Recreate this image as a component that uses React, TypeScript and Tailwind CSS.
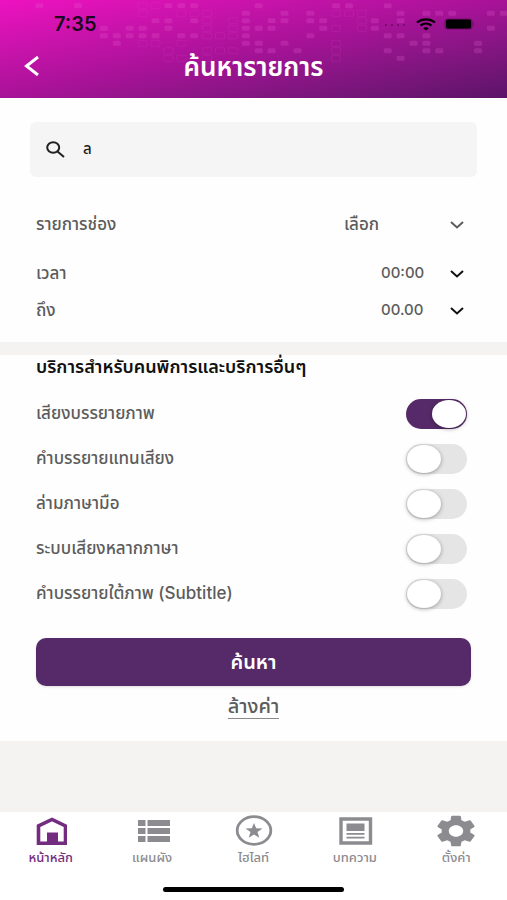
import { useState } from 'react';

// [column, row] cells of the mosaic behind the header
const SOLID_CELLS = [
  [3, 0], [6, 0], [13, 0], [14, 0], [15, 0], [20, 0], [26, 0], [27, 0], [30, 0],
  [19, 1], [22, 1], [24, 1], [31, 1], [33, 1], [34, 1], [35, 1], [38, 1], [39, 1],
  [12, 2], [13, 2], [15, 2], [19, 2], [21, 2], [22, 2], [24, 2], [25, 2], [29, 2], [31, 2],
  [8, 3], [10, 3], [11, 3], [13, 3], [19, 3], [20, 3], [21, 3], [25, 3], [29, 3], [38, 3],
  [8, 4], [9, 4], [10, 4], [11, 4], [12, 4], [14, 4], [15, 4], [19, 4], [24, 4], [30, 4], [31, 4], [33, 4],
  [9, 5], [19, 5], [20, 5], [22, 5], [32, 5], [33, 5], [37, 5],
  [20, 6], [21, 6], [23, 6], [30, 6], [33, 6], [34, 6], [37, 6],
  [31, 7],
];

const OUTLINE_CELLS = [
  [11, 0], [12, 0], [11, 1], [14, 1], [15, 1], [16, 1], [26, 1], [27, 1], [28, 1],
  [16, 2], [18, 2], [28, 2], [16, 3], [18, 3], [26, 3], [28, 3],
  [16, 4], [17, 4], [18, 4], [11, 5], [12, 5], [14, 5], [26, 5],
  [13, 6], [16, 6], [17, 6], [18, 6], [26, 6], [13, 7], [14, 7], [16, 7], [26, 7],
];

const SERVICES = [
  { id: 'audio', label: 'เสียงบรรยายภาพ' },
  { id: 'caption', label: 'คำบรรยายแทนเสียง' },
  { id: 'sign', label: 'ล่ามภาษามือ' },
  { id: 'multi', label: 'ระบบเสียงหลากภาษา' },
  { id: 'subtitle', label: 'คำบรรยายใต้ภาพ (Subtitle)' },
];

const NAV_ITEMS = [
  { id: 'home', label: 'หน้าหลัก', icon: <HomeIcon /> },
  { id: 'schedule', label: 'แผนผัง', icon: <ScheduleIcon /> },
  { id: 'highlight', label: 'ไฮไลท์', icon: <HighlightIcon /> },
  { id: 'article', label: 'บทความ', icon: <ArticleIcon /> },
  { id: 'settings', label: 'ตั้งค่า', icon: <SettingsIcon /> },
];

function HomeIcon() {
  return (
    <svg width="32" height="32" viewBox="0 0 32 32" fill="none">
      <path d="M4 28.200V11L17.500 4.500 31 11v17.200Z" stroke="currentColor" strokeWidth="3.600" transform="translate(-.5 0)" />
      <path d="M12 17.500h11V29H12z" fill="currentColor" />
    </svg>
  );
}

function ScheduleIcon() {
  return (
    <svg width="38" height="32" viewBox="0 0 38 32" fill="currentColor">
      <path d="M5 5h7.500v6H5zM14.500 5H37v6H14.500zM5 13h7.500v6H5zM14.500 13H37v6H14.500zM5 21h7.500v6H5zM14.500 21H37v6H14.500z" />
    </svg>
  );
}

function HighlightIcon() {
  return (
    <svg width="40" height="32" viewBox="0 0 40 32" fill="none">
      <ellipse cx="21" cy="15.500" rx="16.800" ry="13.800" stroke="currentColor" strokeWidth="2.800" />
      <path d="M21 8l2.200 5.200 6.300.2-5 3.700 1.800 5.600-5.300-3.200-5.300 3.200 1.800-5.600-5-3.700 6.300-.2z" fill="currentColor" />
    </svg>
  );
}

function ArticleIcon() {
  return (
    <svg width="36" height="32" viewBox="0 0 36 32" fill="none">
      <path d="M4 4h29.500v24H4z" stroke="currentColor" strokeWidth="3.400" />
      <path d="M9.500 8.500h18V16h-18zM9.500 18h18v1.800h-18zM9.500 21.800h18v1.800h-18z" fill="currentColor" />
    </svg>
  );
}

function SettingsIcon() {
  return (
    <svg width="40" height="32" viewBox="2 2 20 20" preserveAspectRatio="none" fill="currentColor">
      <path d="M19.14 12.94c.04-.3.06-.61.06-.94 0-.32-.02-.64-.07-.94l2.030-1.580c.18-.14.23-.41.12-.61l-1.920-3.320c-.12-.22-.37-.29-.59-.22l-2.390.96c-.5-.38-1.030-.7-1.620-.94l-.36-2.540c-.04-.24-.24-.41-.48-.41h-3.840c-.24 0-.43.17-.47.41l-.36 2.540c-.59.24-1.130.57-1.620.94l-2.390-.96c-.22-.08-.47 0-.59.22L2.740 8.870c-.12.21-.08.47.12.61l2.030 1.580c-.05.3-.09.63-.09.94s.02.64.07.94l-2.030 1.580c-.18.14-.23.41-.12.61l1.920 3.320c.12.22.37.29.59.22l2.390-.96c.5.38 1.030.7 1.620.94l.36 2.540c.05.24.24.41.48.41h3.840c.24 0 .44-.17.47-.41l.36-2.540c.59-.24 1.130-.56 1.620-.94l2.390.96c.22.08.47 0 .59-.22l1.920-3.320c.12-.22.07-.47-.12-.61l-2.010-1.580zM12 15.600c-1.980 0-3.600-1.620-3.600-3.600s1.620-3.600 3.600-3.600 3.600 1.620 3.600 3.600-1.620 3.600-3.600 3.600z" />
    </svg>
  );
}

function Mosaic() {
  return (
    <svg className="absolute left-0 top-0" width="507" height="98" viewBox="0 0 507 98" fill="none" aria-hidden="true">
      {SOLID_CELLS.map(([c, r]) => (
        <rect key={`s${c}-${r}`} x={c * 12.9 - 3.3} y={r * 7.5 + 3.2} width="8" height="5" rx="1.500" fill="#e45fd0" fillOpacity="0.24" />
      ))}
      {OUTLINE_CELLS.map(([c, r]) => (
        <rect key={`o${c}-${r}`} x={c * 12.9 - 3.8} y={r * 7.5 + 2.8} width="9" height="6" rx="1" stroke="#e45fd0" strokeOpacity="0.14" />
      ))}
    </svg>
  );
}

type SelectRowProps = {
  id: string;
  label: string;
  options: string[];
  selectClass: string;
  arrowClass: string;
};

function SelectRow({ id, label, options, selectClass, arrowClass }: SelectRowProps) {
  return (
    <div className="flex h-[37px] items-center justify-between">
      <label htmlFor={id}>{label}</label>
      <div className="relative flex items-center">
        <select id={id} className={`h-8 appearance-none bg-transparent outline-none ${selectClass}`}>
          {options.map(o => (
            <option key={o}>{o}</option>
          ))}
        </select>
        <svg className={`pointer-events-none absolute right-[7px] ${arrowClass}`} width="14" height="8" viewBox="0 0 14 8" fill="none" stroke="currentColor" strokeWidth="2">
          <path d="M1 1l6 5.500L13 1" />
        </svg>
      </div>
    </div>
  );
}

export default function App() {
  const [query, setQuery] = useState('ล');
  const [enabled, setEnabled] = useState<string[]>(['audio']);

  const toggle = (id: string) => {
    setEnabled(prev => (prev.includes(id) ? prev.filter(x => x !== id) : [...prev, id]));
  };

  return (
    <div className="flex min-h-screen flex-col bg-[#f4f3f1] font-['Inter','Noto_Sans_Thai','Noto_Sans',sans-serif] text-[17px] font-medium text-[#5c5c5c]">
      {/* Header */}
      <header className="relative h-[98px] overflow-hidden bg-linear-to-br from-[#ee12c0] via-[#a81298] to-[#5c1468]">
        <Mosaic />
        <div className="relative flex h-12 items-center justify-between pl-[54px] pr-8 text-[#1c0620]">
          <span className="text-xl font-semibold">7:35</span>
          <div className="flex items-center gap-2">
            <svg width="24" height="4" viewBox="0 0 24 4" fill="currentColor" opacity="0.4">
              <circle cx="2" cy="3" r="1" />
              <circle cx="8" cy="3" r="1" />
              <circle cx="14" cy="3" r="1" />
              <circle cx="20" cy="3" r="1" />
            </svg>
            <svg width="20" height="13" viewBox="0 0 20 13" fill="none" stroke="#000" strokeWidth="2.200">
              <path d="M1 4.500C6 .2 14 .2 19 4.500" />
              <path d="M4.500 7.600c3.200-2.600 7.800-2.600 11 0" />
              <path d="M10 12.500L7.300 10.200c1.500-1.300 3.900-1.300 5.400 0z" fill="#000" stroke="none" />
            </svg>
            <svg width="31" height="12" viewBox="0 0 31 12">
              <rect x="0.500" y="0.500" width="28" height="11" rx="3" fill="#000" fillOpacity="0.3" />
              <rect x="2" y="1.500" width="25" height="9" rx="2" fill="#000" />
              <path d="M29 4c1.500.5 1.500 3.500 0 4z" fill="#000" fillOpacity="0.3" />
            </svg>
          </div>
        </div>
        <div className="relative flex h-9 items-center justify-center text-white">
          <button aria-label="ย้อนกลับ" className="absolute left-6">
            <svg width="16" height="20" viewBox="0 0 16 20" fill="none" stroke="currentColor" strokeWidth="3">
              <path d="M14 1L2.500 10 14 19" />
            </svg>
          </button>
          <h1 className="text-[26px] font-semibold">ค้นหารายการ</h1>
        </div>
      </header>

      {/* Search + filters */}
      <section className="bg-[#fefefe] px-9 pb-[13px] pt-6">
        <label className="-mx-[6px] flex h-[55px] items-center gap-[18px] rounded-md bg-[#f5f5f5] px-4 text-[#222]">
          <svg width="19" height="17" viewBox="0 0 19 17" fill="none" stroke="currentColor" strokeWidth="2" className="shrink-0">
            <ellipse cx="7.200" cy="6.500" rx="6" ry="5.300" />
            <path d="M11.500 10.500l6.500 5.500" />
          </svg>
          <input
            type="text"
            aria-label="ค้นหา"
            value={query}
            onChange={e => setQuery(e.target.value)}
            className="min-w-0 flex-1 bg-transparent text-[15px] outline-none"
          />
        </label>
        <div className="mt-[29px]">
          <SelectRow id="channel" label="รายการช่อง" options={['เลือก']} selectClass="w-[127px]" arrowClass="text-[#5c5c5c]" />
        </div>
        <div className="mt-3">
          <SelectRow id="from" label="เวลา" options={['00:00']} selectClass="w-[90px] text-[15px]" arrowClass="text-[#111]" />
          <SelectRow id="to" label="ถึง" options={['00.00']} selectClass="w-[90px] text-[15px]" arrowClass="text-[#111]" />
        </div>
      </section>

      {/* Accessibility services */}
      <section className="mt-[13px] bg-[#fefefe] px-9 pb-[22px]">
        <h2 className="h-9 text-lg leading-6 font-semibold whitespace-nowrap text-[#111]">บริการสำหรับคนพิการและบริการอื่นๆ</h2>
        {SERVICES.map(s => (
          <label key={s.id} className="flex h-[45px] items-center justify-between pr-1">
            {s.label}
            <input
              type="checkbox"
              role="switch"
              checked={enabled.includes(s.id)}
              onChange={() => toggle(s.id)}
              className="h-[30px] w-[61px] shrink-0 cursor-pointer appearance-none rounded-full bg-[#e5e5e5] p-px transition-colors before:block before:h-7 before:w-[34px] before:rounded-[50%] before:bg-white before:shadow-[0_1px_4px_rgba(0,0,0,0.35)] checked:bg-[#562a68] checked:before:ml-auto"
            />
          </label>
        ))}
        <button className="mt-[22px] block h-12 w-full rounded-[10px] bg-[#562a68] text-xl font-semibold text-white shadow-sm">
          ค้นหา
        </button>
        <div className="mt-2 text-center text-xl leading-6">
          <button className="border-b border-[#8a8a8a]">ล้างค่า</button>
        </div>
      </section>

      {/* Bottom navigation */}
      <nav className="mt-auto bg-white pt-[3px]">
        <div className="grid grid-cols-5">
          {NAV_ITEMS.map(item => (
            <a
              key={item.id}
              href={`#${item.id}`}
              className={`flex flex-col items-center text-[13px] leading-[18px] ${item.id === 'home' ? 'text-[#732c80]' : 'text-[#8c8b90]'}`}
            >
              {item.icon}
              <span className="mt-px">{item.label}</span>
            </a>
          ))}
        </div>
        <div className="mx-auto mb-2 mt-[21px] h-[5px] w-[181px] rounded-full bg-black" />
      </nav>
    </div>
  );
}
